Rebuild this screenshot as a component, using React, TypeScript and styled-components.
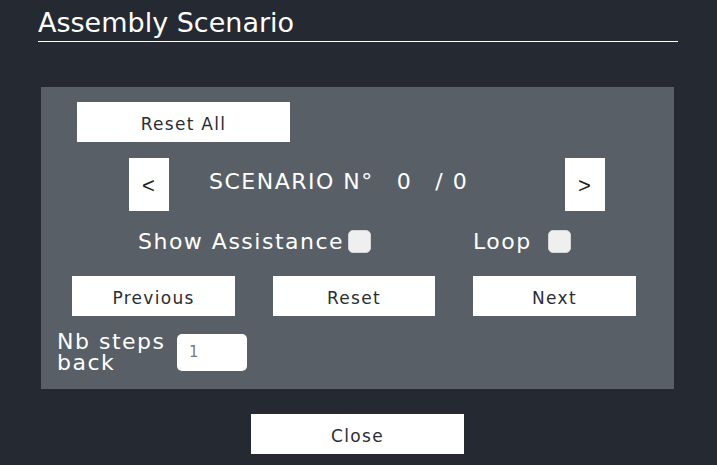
import styled, { createGlobalStyle } from "styled-components";

const GlobalStyle = createGlobalStyle`
  html, body {
    margin: 0;
    padding: 0;
    background: #252932;
  }
  body {
    font-family: "DejaVu Sans", "Liberation Sans", sans-serif;
  }
`;

const Page = styled.div`
  width: 717px;
  height: 465px;
  padding: 8px 0 0 38px;
  box-sizing: border-box;
  overflow: hidden;
`;

const Title = styled.h1`
  width: 640px;
  margin: 0;
  padding: 1px 0 4px 0;
  border-bottom: 1px solid #ffffff;
  color: #ffffff;
  font-family: "DejaVu Sans", "Liberation Sans", sans-serif;
  font-size: 27px;
  font-weight: 400;
  line-height: 28px;
`;

const Panel = styled.div`
  width: 633px;
  height: 302px;
  margin: 45px 0 0 3px;
  padding-top: 15px;
  box-sizing: border-box;
  background: #585f66;
  display: flex;
  flex-direction: column;
`;

const WhiteButton = styled.button<{ $w: number; $h?: number }>`
  width: ${(p) => p.$w}px;
  height: ${(p) => p.$h ?? 40}px;
  border: none;
  border-radius: 0;
  background: #ffffff;
  color: #2a2d33;
  font-family: "DejaVu Sans", "Liberation Sans", sans-serif;
  font-size: 17px;
  letter-spacing: 1.3px;
  padding: 4px 0 0 0;
  cursor: pointer;
`;

const Row = styled.div<{ $left: number; $top: number; $gap?: number }>`
  display: flex;
  align-items: center;
  margin: ${(p) => p.$top}px 0 0 ${(p) => p.$left}px;
  gap: ${(p) => p.$gap ?? 0}px;
`;

const ArrowButton = styled(WhiteButton)`
  font-family: "Liberation Sans", sans-serif;
  font-size: 22px;
  font-weight: 300;
  color: #222;
  padding: 2px 0 0 0;
`;

const ScenarioLabel = styled.div`
  width: 396px;
  display: flex;
  align-items: center;
  padding: 0 0 7px 40px;
  box-sizing: border-box;
  color: #ffffff;
  font-size: 22px;
  letter-spacing: 1.5px;
  white-space: pre;
`;

const Counter = styled.span<{ $ml: number }>`
  margin-left: ${(p) => p.$ml}px;
`;

const Label = styled.label<{ $w?: number }>`
  display: flex;
  align-items: center;
  height: 24px;
  color: #ffffff;
  font-size: 22px;
  letter-spacing: 1.5px;
  ${(p) => (p.$w ? `width: ${p.$w}px;` : "")}
`;

const Check = styled.input.attrs({ type: "checkbox" })<{ $ml: number }>`
  appearance: none;
  width: 23px;
  height: 23px;
  margin: 0 0 0 ${(p) => p.$ml}px;
  border-radius: 5px;
  background: #efefef;
  border: 1px solid #d6d6d6;
  box-sizing: border-box;
`;

const StepsLabel = styled.div`
  width: 120px;
  color: #ffffff;
  font-size: 22px;
  line-height: 21px;
  letter-spacing: 1.5px;
`;

const StepsInput = styled.input`
  width: 70px;
  height: 37px;
  box-sizing: border-box;
  border: none;
  border-radius: 5px;
  background: #ffffff;
  color: #7a7a7a;
  font-family: "DejaVu Sans", "Liberation Sans", sans-serif;
  font-size: 15px;
  padding: 0 0 0 12px;
  outline: none;
`;

const Footer = styled.div`
  width: 633px;
  margin: 25px 0 0 3px;
  display: flex;
  justify-content: center;
`;

const App = () => {
  return (
    <>
      <GlobalStyle />
      <Page>
        <Title>Assembly Scenario</Title>
        <Panel>
          <Row $left={36} $top={0}>
            <WhiteButton $w={213}>Reset All</WhiteButton>
          </Row>
          <Row $left={88} $top={16}>
            <ArrowButton $w={40} $h={53}>&lt;</ArrowButton>
            <ScenarioLabel>
              SCENARIO N°
              <Counter $ml={23}>0</Counter>
              <Counter $ml={23}>/ 0</Counter>
            </ScenarioLabel>
            <ArrowButton $w={40} $h={53}>&gt;</ArrowButton>
          </Row>
          <Row $left={97} $top={18}>
            <Label $w={335}>
              Show Assistance
              <Check $ml={4} />
            </Label>
            <Label>
              Loop
              <Check $ml={16} />
            </Label>
          </Row>
          <Row $left={31} $top={23} $gap={38}>
            <WhiteButton $w={163}>Previous</WhiteButton>
            <WhiteButton $w={162}>Reset</WhiteButton>
            <WhiteButton $w={163}>Next</WhiteButton>
          </Row>
          <Row $left={16} $top={15}>
            <StepsLabel>
              Nb steps
              <br />
              back
            </StepsLabel>
            <StepsInput defaultValue="1" />
          </Row>
        </Panel>
        <Footer>
          <WhiteButton $w={213}>Close</WhiteButton>
        </Footer>
      </Page>
    </>
  );
};

export default App;
